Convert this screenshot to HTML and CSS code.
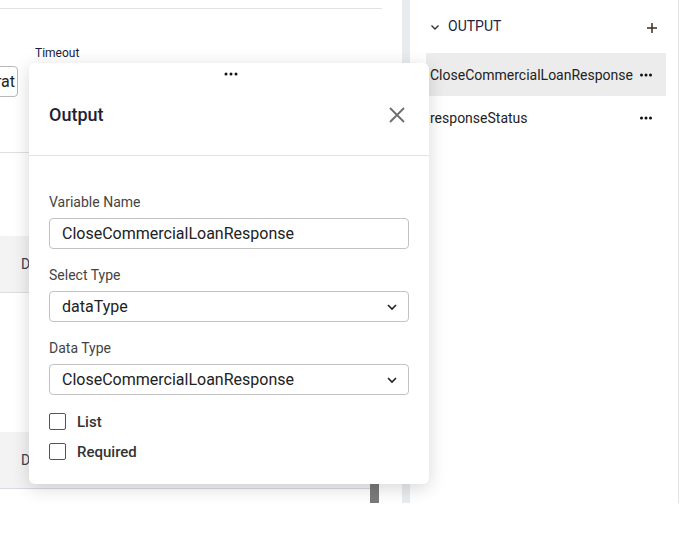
FILE: index.html
```html
<!DOCTYPE html>
<html>
<head>
<meta charset="utf-8">
<link rel="stylesheet" href="styles.css">
</head>
<body>
<div class="page">
  <div class="left">
    <div class="left-content">
      <div class="topline"></div>
      <div class="fields-row">
        <div class="field cut">
          <div class="flabel">&nbsp;</div>
          <div class="finput">Integrat</div>
        </div>
        <div class="field">
          <div class="flabel">Timeout</div>
          <div class="finput"></div>
        </div>
      </div>
      <div class="sep"></div>
      <div class="band"><span>D</span></div>
      <div class="spacer"></div>
      <div class="band band2"><span>D</span></div>
    </div>
    <div class="vscroll"><div class="thumb"></div></div>
  </div>
  <div class="track"></div>
  <div class="right">
    <div class="rhead">
      <svg class="chev" width="10" height="10" viewBox="0 0 10 10"><path d="M1.5 3.5 L5 7 L8.5 3.5" fill="none" stroke="#333" stroke-width="1.4"/></svg>
      <span class="rtitle">OUTPUT</span>
      <svg class="plus" width="12" height="12" viewBox="0 0 12 12"><path d="M6 1 V11 M1 6 H11" stroke="#3a2f25" stroke-width="1.5"/></svg>
    </div>
    <div class="ritem active"><span>CloseCommercialLoanResponse</span><svg class="dots" width="12" height="4" viewBox="0 0 12 4"><circle cx="1.5" cy="2" r="1.5"/><circle cx="6" cy="2" r="1.5"/><circle cx="10.5" cy="2" r="1.5"/></svg></div>
    <div class="ritem"><span>responseStatus</span><svg class="dots" width="12" height="4" viewBox="0 0 12 4"><circle cx="1.5" cy="2" r="1.5"/><circle cx="6" cy="2" r="1.5"/><circle cx="10.5" cy="2" r="1.5"/></svg></div>
  </div>
</div>

<div class="modal">
  <div class="grip"><svg width="14" height="4" viewBox="0 0 14 4"><circle cx="2" cy="2" r="1.5"/><circle cx="7" cy="2" r="1.5"/><circle cx="12" cy="2" r="1.5"/></svg></div>
  <div class="mhead">
    <span class="mtitle">Output</span>
    <svg class="close" width="16" height="16" viewBox="0 0 16 16"><path d="M1 1 L15 15 M15 1 L1 15" stroke="#6e6e6e" stroke-width="1.8"/></svg>
  </div>
  <div class="mbody">
    <label class="lbl">Variable Name</label>
    <div class="box">CloseCommercialLoanResponse</div>
    <label class="lbl">Select Type</label>
    <div class="box sel">dataType<svg width="12" height="8" viewBox="0 0 12 8"><path d="M2 2 L6 6 L10 2" fill="none" stroke="#222" stroke-width="1.6"/></svg></div>
    <label class="lbl">Data Type</label>
    <div class="box sel">CloseCommercialLoanResponse<svg width="12" height="8" viewBox="0 0 12 8"><path d="M2 2 L6 6 L10 2" fill="none" stroke="#222" stroke-width="1.6"/></svg></div>
    <div class="checks">
      <div class="chk"><span class="cb"></span>List</div>
      <div class="chk"><span class="cb"></span>Required</div>
    </div>
  </div>
</div>
</body>
</html>
```

FILE: styles.css
```css
* { box-sizing: border-box; }
html, body { margin: 0; padding: 0; background: #fff; }
body { font-family: Roboto, "Noto Sans", sans-serif; color: #222; width: 682px; height: 537px; overflow: hidden; position: relative; }

.page { display: flex; height: 503px; }
.left { width: 402px; display: flex; }
.left-content { width: 370px; }
.topline { height: 9px; border-bottom: 1px solid #e2e2e2; width: 382px; }
.fields-row { display: flex; gap: 17px; padding-top: 37px; height: 143px; overflow: hidden; }
.field { display: flex; flex-direction: column; gap: 6px; }
.field.cut { margin-left: -60px; width: 78px; }
.flabel { font-size: 12px; line-height: 14px; color: #1b1b3a; }
.finput { height: 31px; border: 1px solid #b8b8b8; border-radius: 4px; font-size: 16px; line-height: 29px; padding: 0 2px 0 12px; text-align: right; width: 78px; white-space: nowrap; overflow: hidden; }
.field:not(.cut) .finput { width: 200px; }
.sep { border-top: 1px solid #e0e0e0; height: 84px; }
.band { height: 57px; background: #f3f3f3; border-bottom: 1px solid #dedede; display: flex; align-items: center; padding-left: 21px; font-size: 14px; color: #3c4250; }
.spacer { height: 139px; }
.band2 { border-bottom-color: #d8d8e6; }
.vscroll { width: 9px; display: flex; flex-direction: column; justify-content: flex-end; }
.thumb { height: 20px; background: #7a7a7a; }
.track { width: 8px; background: #e9ecef; }
.right { width: 269px; border-right: 1px solid #e4e4e4; padding: 0 12px 0 16px; }
.rhead { display: flex; align-items: center; height: 53px; padding: 0 0 0 4px; }
.chev { margin-right: 8px; margin-top: 1px; }
.rtitle { font-size: 14px; color: #24243f; flex: 1; margin-top: -1px; }
.plus { margin-right: 8px; margin-top: 3px; }
.ritem { height: 43px; display: flex; align-items: center; justify-content: space-between; padding: 0 14px 0 4px; font-size: 14px; color: #222; }
.ritem.active { background: #ececec; }
.dots { fill: #111; margin-top: 1px; }

.modal { position: absolute; left: 29px; top: 63px; width: 400px; height: 421px; background: #fff; border-radius: 6px; box-shadow: 0 4px 18px rgba(0,0,0,0.16); }
.grip { display: flex; justify-content: center; align-items: center; height: 22px; fill: #111; padding-left: 3px; }
.mhead { height: 73px; border-bottom: 1px solid #e2e2e2; display: flex; align-items: center; justify-content: space-between; padding: 0 24px 0 20px; margin-top: -2px; }
.mtitle { font-size: 18px; font-weight: 500; color: #1e1e38; margin-top: -9px; }
.close { margin-top: -8px; }
.mbody { padding: 38px 20px 0 20px; display: flex; flex-direction: column; }
.lbl { font-size: 14px; line-height: 16px; color: #444; margin-bottom: 8px; }
.box { height: 31px; border: 1px solid #c3c3c3; border-radius: 4px; font-size: 16px; color: #222; display: flex; align-items: center; padding: 0 12px; margin-bottom: 18px; justify-content: space-between; }
.box.sel svg { margin-right: -2px; }
.checks { display: flex; flex-direction: column; gap: 13px; margin-top: 0; }
.chk { display: flex; align-items: center; font-size: 15px; font-weight: 500; color: #333; height: 17px; }
.cb { width: 17px; height: 17px; border: 1.5px solid #555; border-radius: 2px; margin-right: 11px; }
```
